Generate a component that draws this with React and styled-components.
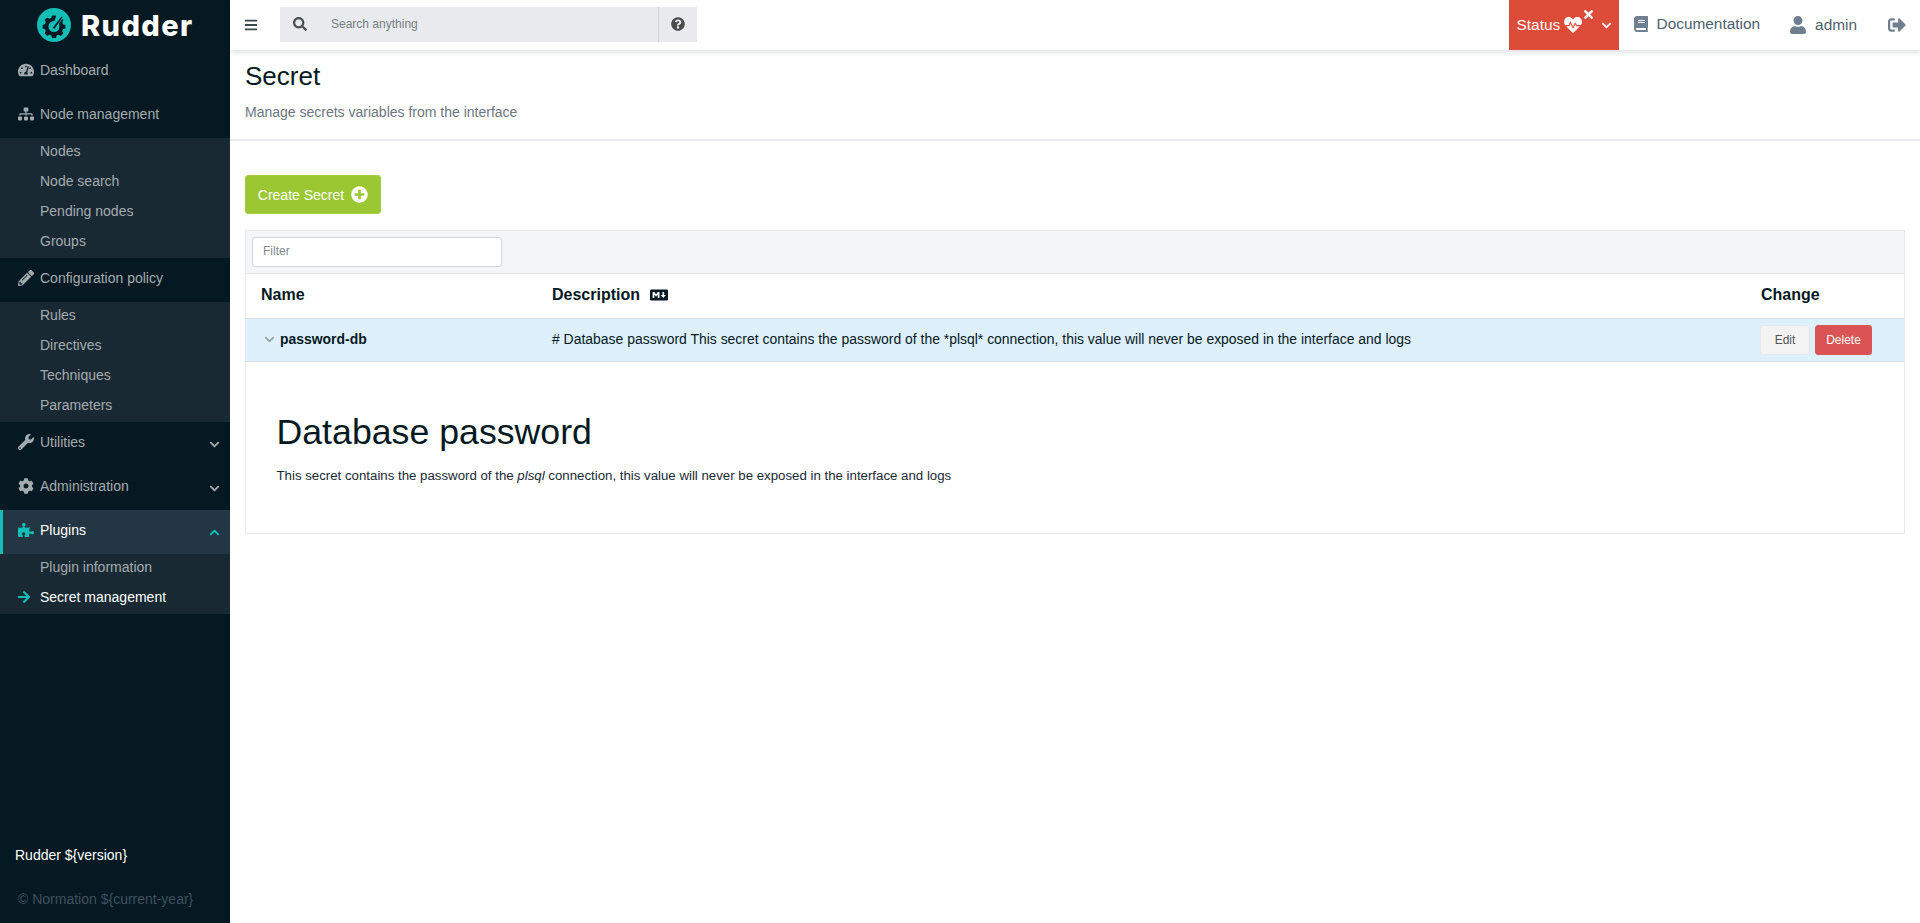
import React from 'react'
import styled, { createGlobalStyle } from 'styled-components'
import {
  FaBars, FaBook, FaChevronDown, FaChevronUp, FaCog, FaArrowRight, FaHeartbeat, FaMarkdown,
  FaPencilAlt, FaPlusCircle, FaPuzzlePiece, FaQuestionCircle, FaSearch, FaSignOutAlt, FaSitemap,
  FaTachometerAlt, FaTimes, FaUser, FaWrench,
} from 'react-icons/fa'

const GlobalStyle = createGlobalStyle`
  html, body { margin: 0; padding: 0; height: 100%; overflow: hidden; }
  body { font-family: "Liberation Sans", Arial, sans-serif; font-size: 14px; color: #041922; background: #fff; }
  * { box-sizing: border-box; }
`

const Page = styled.div`
  display: flex;
  height: 923px;
`

const Sidebar = styled.aside`
  width: 230px;
  flex: none;
  display: flex;
  flex-direction: column;
  background: #041922;
`

const Logo = styled.div`
  height: 50px;
  display: flex;
  align-items: center;
  padding-left: 37px;
  gap: 10px;
  color: #fff;
  font-family: Inter, sans-serif;
  font-weight: 800;
  font-size: 29px;
  letter-spacing: 1.4px;
`

const MenuItem = styled.div`
  height: 44px;
  display: flex;
  align-items: center;
  padding: 0 10px 4px 18px;
  color: ${p => (p.$active ? '#fff' : '#a4abaf')};
  background: ${p => (p.$active ? '#233643' : 'transparent')};
  box-shadow: ${p => (p.$active ? 'inset 3px 0 0 #13beb7' : 'none')};
  line-height: 20px;
  svg { flex: none; }
`

const MenuIcon = styled.span`
  width: 22px;
  display: flex;
  color: ${p => (p.$active ? '#13beb7' : '#a4abaf')};
  font-size: 16px;
`

const Caret = styled.span`
  margin-left: auto;
  display: flex;
  font-size: 11px;
  padding-top: 4px;
  color: ${p => (p.$active ? '#13beb7' : '#a4abaf')};
`

const SubMenu = styled.div`
  background: #182933;
`

const SubItem = styled.div`
  position: relative;
  height: 30px;
  display: flex;
  align-items: center;
  padding: 0 0 4px 40px;
  color: ${p => (p.$active ? '#fff' : '#a4abaf')};
  svg {
    position: absolute;
    left: 17px;
    top: 6px;
    font-size: 14px;
    color: #13beb7;
  }
`

const SideFooter = styled.div`
  margin-top: auto;
  padding-bottom: 14px;
`

const Version = styled.div`
  padding-left: 15px;
  line-height: 20px;
  color: #fff;
  margin-bottom: 24px;
`

const Copyright = styled.div`
  padding-left: 18px;
  line-height: 20px;
  color: #3e515d;
`

const Main = styled.div`
  flex: 1;
  min-width: 0;
  display: flex;
  flex-direction: column;
`

const Header = styled.header`
  position: relative;
  height: 50px;
  flex: none;
  display: flex;
  background: #fff;
  box-shadow: 0 2px 6px rgba(4, 25, 34, 0.15);
`

const BarsButton = styled.div`
  width: 50px;
  display: flex;
  align-items: center;
  justify-content: center;
  padding-right: 8px;
  font-size: 14px;
  color: #36474e;
`

const SearchBox = styled.div`
  width: 417px;
  height: 35px;
  margin-top: 7px;
  display: flex;
  align-items: center;
  background: #e8eaed;
  font-size: 12px;
  color: #757e86;
`

const SearchIcon = styled.span`
  width: 51px;
  padding: 0 0 2px 13px;
  display: flex;
  font-size: 14px;
  color: #4a4f52;
`

const SearchLabel = styled.span`
  flex: 1;
  padding-bottom: 2px;
`

const HelpButton = styled.span`
  width: 39px;
  height: 100%;
  display: flex;
  align-items: center;
  justify-content: center;
  padding-bottom: 2px;
  border-left: 1px solid #cfd2d5;
  font-size: 14px;
  color: #4a4a4a;
`

const HeaderRight = styled.div`
  margin-left: auto;
  display: flex;
  align-items: center;
  height: 100%;
  padding-right: 14px;
  color: #4e5f6e;
  font-size: 15.4px;
`

const StatusBox = styled.div`
  position: relative;
  width: 110px;
  height: 100%;
  display: flex;
  align-items: center;
  padding-left: 8px;
  background: #dd4b39;
  color: #fff;
  font-size: 15.4px;
`

const StatusHeart = styled.span`
  display: flex;
  margin-left: 4px;
  font-size: 18px;
`

const StatusCross = styled.span`
  position: absolute;
  left: 73px;
  top: 8px;
  display: flex;
  font-size: 13px;
`

const StatusCaret = styled.span`
  position: absolute;
  left: 92px;
  top: 20px;
  display: flex;
  font-size: 11px;
`

const HeaderLink = styled.div`
  display: flex;
  align-items: center;
  margin-left: ${p => p.$left}px;
  gap: ${p => p.$gap}px;
  padding-bottom: ${p => p.$lift || 0}px;
  svg { color: #6f7f90; font-size: ${p => p.$icon}px; }
`

const Content = styled.main`
  flex: 1;
  overflow: hidden;
`

const TitleBlock = styled.div`
  height: 91px;
  padding: 10px 15px 0;
  border-bottom: 2px solid #e8eaed;
`

const Title = styled.h1`
  margin: 0;
  font-size: 26px;
  font-weight: 400;
  line-height: 32px;
`

const Subtitle = styled.p`
  margin: 10px 0 0;
  color: #6d7781;
  line-height: 20px;
`

const Body = styled.div`
  padding: 34px 15px 0;
`

const CreateButton = styled.button`
  height: 39px;
  width: 136px;
  display: flex;
  align-items: center;
  justify-content: center;
  gap: 7px;
  padding: 0;
  background: #9bc832;
  border: 1px solid #a4cf40;
  border-radius: 3px;
  color: #fff;
  font: inherit;
  svg { font-size: 17px; }
`

const Card = styled.section`
  margin-top: 16px;
  border: 1px solid #e8eaed;
`

const FilterBar = styled.div`
  height: 43px;
  padding: 6px 6px;
  background: #f4f5f6;
  border-bottom: 1px solid #e4e6e9;
`

const FilterInput = styled.input`
  display: block;
  width: 250px;
  height: 30px;
  padding: 0 10px 2px;
  border: 1px solid #d3d6d9;
  border-radius: 3px;
  background: #fff;
  font: 12px "Liberation Sans", Arial, sans-serif;
  &::placeholder { color: #808a92; }
`

const Row = styled.div`
  display: grid;
  grid-template-columns: 291px 1fr 144px;
  align-items: center;
`

const HeadRow = styled(Row)`
  height: 44px;
  padding: 0 0 2px 15px;
  font-size: 16px;
  font-weight: 700;
`

const HeadLabel = styled.span`
  display: flex;
  align-items: center;
  gap: 10px;
  svg { font-size: 18px; }
`

const ChangeLabel = styled.span`
  padding-left: 1px;
`

const SecretRow = styled(Row)`
  height: 44px;
  background: #dff0fd;
  border-top: 1px solid #d9e3ea;
  border-bottom: 1px solid #d9e3ea;
  font-size: 13.95px;
  padding-left: 15px;
`

const SecretName = styled.span`
  display: flex;
  align-items: center;
  gap: 5px;
  padding-bottom: 2px;
  font-weight: 700;
  svg { font-size: 11px; color: #9aa3a9; margin-left: 3px; }
`

const SecretText = styled.span`
  padding-bottom: 2px;
`

const Actions = styled.span`
  display: flex;
  gap: 5px;
`

const SmallButton = styled.button`
  height: 30px;
  padding: 0;
  width: ${p => (p.$danger ? 57 : 50)}px;
  border-radius: 3px;
  border: 1px solid ${p => (p.$danger ? '#dd5554' : '#e8e8e8')};
  background: ${p => (p.$danger ? '#da5453' : '#f3f3f3')};
  color: ${p => (p.$danger ? '#fff' : '#555')};
  font: 12px "Liberation Sans", Arial, sans-serif;
`

const Details = styled.div`
  height: 171px;
  padding: 46px 31px 0 30.5px;
`

const DetailsTitle = styled.h2`
  margin: 0;
  font-size: 35.7px;
  font-weight: 400;
  line-height: 48px;
`

const DetailsText = styled.p`
  margin: 10px 0 0;
  font-size: 13.25px;
  line-height: 20px;
  color: #182933;
`

const menu = [
  { label: 'Dashboard', icon: <FaTachometerAlt /> },
  { label: 'Node management', icon: <FaSitemap />, sub: ['Nodes', 'Node search', 'Pending nodes', 'Groups'] },
  { label: 'Configuration policy', icon: <FaPencilAlt />, sub: ['Rules', 'Directives', 'Techniques', 'Parameters'] },
  { label: 'Utilities', icon: <FaWrench />, caret: 'down' },
  { label: 'Administration', icon: <FaCog />, caret: 'down' },
  { label: 'Plugins', icon: <FaPuzzlePiece />, caret: 'up', active: true, sub: ['Plugin information', 'Secret management'], current: 'Secret management' },
]

const RudderMark = () => (
  <svg width="34" height="34" viewBox="0 0 34 34">
    <circle cx="17" cy="17" r="17" fill="#13beb7" />
    <path
      d="M15 7.5h4l.6 2.3 2.2.9 2-1.2 2.6 2.6-1.2 2 .9 2.2 2.3.6v3.6l-2.3.6-.9 2.2 1.2 2-2.6 2.6-2-1.2-2.2.9-.6 2.3h-4l-.6-2.3-2.2-.9-2 1.2-2.6-2.6 1.2-2-.9-2.2-2.3-.6v-3.6l2.3-.6.9-2.2-1.2-2 2.6-2.6 2 1.2 2.2-.9z"
      fill="#041922"
    />
    <circle cx="17" cy="18.5" r="5.5" fill="#13beb7" />
    <path d="M20 5.5l7.5 2.5-9.5 13-2.5-2z" fill="#13beb7" />
    <path d="M15.8 19.8L24.5 8.5l1 .8-8.2 11.8z" fill="#041922" />
  </svg>
)

const App = () => {
  return (
    <Page>
      <GlobalStyle />
      <Sidebar>
        <Logo>
          <RudderMark />
          Rudder
        </Logo>
        {menu.map(item => (
          <React.Fragment key={item.label}>
            <MenuItem $active={item.active}>
              <MenuIcon $active={item.active}>{item.icon}</MenuIcon>
              {item.label}
              {item.caret && (
                <Caret $active={item.active}>
                  {item.caret === 'up' ? <FaChevronUp /> : <FaChevronDown />}
                </Caret>
              )}
            </MenuItem>
            {item.sub && (
              <SubMenu>
                {item.sub.map(name => (
                  <SubItem key={name} $active={name === item.current}>
                    {name === item.current && <FaArrowRight />}
                    {name}
                  </SubItem>
                ))}
              </SubMenu>
            )}
          </React.Fragment>
        ))}
        <SideFooter>
          <Version>{'Rudder ${version}'}</Version>
          <Copyright>{'© Normation ${current-year}'}</Copyright>
        </SideFooter>
      </Sidebar>
      <Main>
        <Header>
          <BarsButton><FaBars /></BarsButton>
          <SearchBox>
            <SearchIcon><FaSearch /></SearchIcon>
            <SearchLabel>Search anything</SearchLabel>
            <HelpButton><FaQuestionCircle /></HelpButton>
          </SearchBox>
          <HeaderRight>
            <StatusBox>
              Status
              <StatusHeart><FaHeartbeat /></StatusHeart>
              <StatusCross><FaTimes /></StatusCross>
              <StatusCaret><FaChevronDown /></StatusCaret>
            </StatusBox>
            <HeaderLink $left={14} $gap={8} $icon={16} $lift={2}><FaBook />Documentation</HeaderLink>
            <HeaderLink $left={29} $gap={8} $icon={18}><FaUser />admin</HeaderLink>
            <HeaderLink $left={31} $gap={0} $icon={18}><FaSignOutAlt /></HeaderLink>
          </HeaderRight>
        </Header>
        <Content>
          <TitleBlock>
            <Title>Secret</Title>
            <Subtitle>Manage secrets variables from the interface</Subtitle>
          </TitleBlock>
          <Body>
            <CreateButton>Create Secret <FaPlusCircle /></CreateButton>
            <Card>
              <FilterBar>
                <FilterInput placeholder="Filter" />
              </FilterBar>
              <HeadRow>
                <span>Name</span>
                <HeadLabel>Description <FaMarkdown /></HeadLabel>
                <ChangeLabel>Change</ChangeLabel>
              </HeadRow>
              <SecretRow>
                <SecretName><FaChevronDown />password-db</SecretName>
                <SecretText># Database password This secret contains the password of the *plsql* connection, this value will never be exposed in the interface and logs</SecretText>
                <Actions>
                  <SmallButton>Edit</SmallButton>
                  <SmallButton $danger>Delete</SmallButton>
                </Actions>
              </SecretRow>
              <Details>
                <DetailsTitle>Database password</DetailsTitle>
                <DetailsText>This secret contains the password of the <em>plsql</em> connection, this value will never be exposed in the interface and logs</DetailsText>
              </Details>
            </Card>
          </Body>
        </Content>
      </Main>
    </Page>
  )
}

export default App
